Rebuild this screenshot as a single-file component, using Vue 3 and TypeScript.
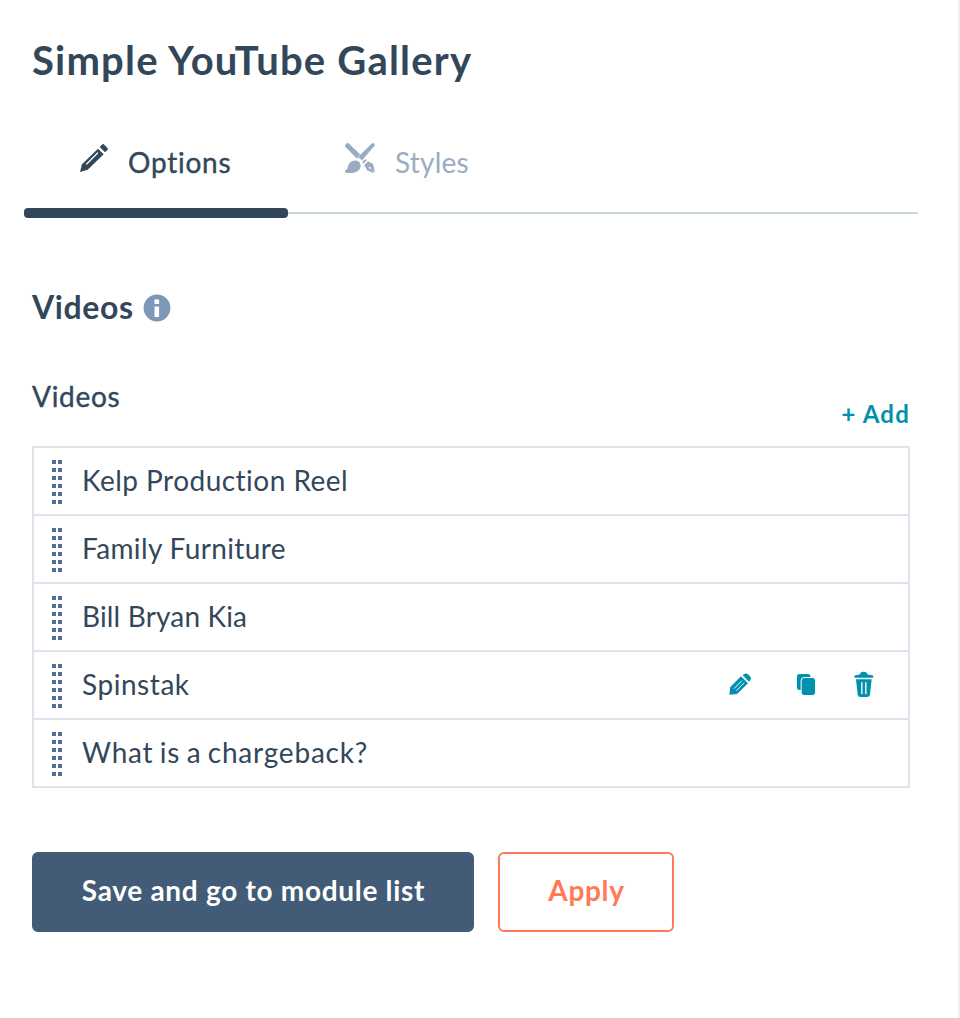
<script setup lang="ts">
import { ref } from 'vue'

interface Video {
  title: string
  spacing: string
}

const videos: Video[] = [
  { title: 'Kelp Production Reel', spacing: 'kelp' },
  { title: 'Family Furniture', spacing: 'family' },
  { title: 'Bill Bryan Kia', spacing: 'bill' },
  { title: 'Spinstak', spacing: 'spinstak' },
  { title: 'What is a chargeback?', spacing: 'what' },
]

const hovered = ref<number>(3)
</script>

<template>
  <main class="panel">
    <h1 class="title">Simple YouTube Gallery</h1>

    <nav class="tabs">
      <a class="tab active">
        <svg class="tab-icon" viewBox="30 39 90 90">
          <path fill="currentColor" d="M30 126 L36 103 L84 56 L101 73 L53 119 Z" />
          <path fill="currentColor" d="M89 51 L97 43 Q99 41 101 43 L113 55 Q115 57 113 59 L105 67 Z" />
          <path fill="none" stroke="#fff" stroke-width="3.6" stroke-linecap="round" d="M50 102 L83 69" />
        </svg>
        <span class="options">Options</span>
      </a>
      <a class="tab idle">
        <svg class="tab-icon" viewBox="30 39 90 90">
          <path fill="none" stroke="currentColor" stroke-width="15" stroke-linecap="round" d="M38 47 L60 69" />
          <path fill="currentColor" d="M50 70 L61 59 L77 74 L66 86 Z" />
          <path fill="currentColor" stroke="#fff" stroke-width="1.5" d="M109 41 Q114 36 119 41 Q122 45 118 49 L81 92 L68 81 Z" />
          <path fill="currentColor" d="M30 121 C40 120 37 108 43 100 C50 90 66 88 73 97 C82 107 75 121 63 126 C52 130 37 130 30 127 Z" />
          <path fill="currentColor" d="M81 97 L91 87 L95 91 L85 101 Z" />
          <path fill="currentColor" d="M88 105 L99 94 L114 102 L119 123 Q119 128 114 128 L96 121 Z" />
          <path fill="none" stroke="#fff" stroke-width="1.2" d="M105 114 L117 126" />
          <circle cx="104" cy="113" r="2.8" fill="#fff" />
        </svg>
        <span class="styles">Styles</span>
      </a>
    </nav>

    <h2 class="section">
      <span>Videos</span>
      <svg class="info" viewBox="0 0 28 28">
        <circle cx="14" cy="14" r="13.4" fill="#7c98b6" />
        <path fill="#fff" d="M11.500 5.500h4.600v4.500h-4.600z M11.500 12.500h4.600v10.500h-4.600z" />
      </svg>
    </h2>

    <div class="field-head">
      <label class="label">Videos</label>
      <a class="add">+ Add</a>
    </div>

    <ul class="list">
      <li v-for="(video, i) in videos" :key="video.title" class="row">
        <span class="grip"><i v-for="n in 12" :key="n" /></span>
        <span class="name" :class="video.spacing">{{ video.title }}</span>
        <span v-if="hovered === i" class="actions">
          <svg class="edit" viewBox="27 39 69 69">
            <path fill="currentColor" d="M28 104 L31 81 L63 49 L84 70 L51 102 Z" />
            <path fill="currentColor" d="M68 46 Q76 37 84 43 L91 50 Q96 57 87 65 Z" />
            <path fill="none" stroke="#fff" stroke-width="2.800" stroke-linecap="round" d="M43 85 L65 63 M50 91 L72 69" />
          </svg>
          <svg class="copy" viewBox="33 39 60 69">
            <rect x="36" y="42" width="40" height="48" rx="7" fill="currentColor" />
            <rect x="48.5" y="52.5" width="43" height="54" rx="9" fill="currentColor" stroke="#fff" stroke-width="3" />
          </svg>
          <svg class="trash" viewBox="207 33 60 81">
            <path fill="currentColor" d="M211 46 L222 44 Q225 42 227 38 Q230 35 236 35 Q242 35 245 38 Q247 42 250 44 L262 46 Q265 47 265 50 Q265 53 262 53 H211 Q208 53 208 50 Q208 47 211 46 Z" />
            <path fill="currentColor" d="M213 58 H260 L255 104 Q254 111 246 111 H227 Q219 111 218 104 Z" />
            <path stroke="#fff" stroke-width="4" stroke-linecap="round" d="M230.500 68 V101 M242.500 68 V101" />
          </svg>
        </span>
      </li>
    </ul>

    <div class="buttons">
      <button class="btn save">Save and go to module list</button>
      <button class="btn apply">Apply</button>
    </div>
  </main>
</template>

<style>
body {
  margin: 0;
  background: #fff;
}
</style>

<style scoped>
.panel {
  box-sizing: border-box;
  width: 960px;
  height: 1018px;
  padding: 36px 40px 0 32px;
  border-right: 2px solid #eaf0f6;
  background: #fff;
  color: #33475b;
  font-family: Lato, "Open Sans", sans-serif;
  font-size: 28px;
  font-variant-ligatures: none;
  overflow: hidden;
}

.title {
  margin: 0;
  font-size: 40px;
  font-weight: 700;
  line-height: 48px;
  height: 48px;
  letter-spacing: 1.2px;
  white-space: nowrap;
}

.tabs {
  display: flex;
  margin: 40px 0 0 -8px;
  height: 94px;
  background: linear-gradient(#c9d9e4, #c9d9e4) 0 88px / 894px 2px no-repeat;
}

.tab {
  box-sizing: border-box;
  display: flex;
  height: 94px;
  width: 264px;
  padding-left: 56px;
  line-height: 34px;
}

.tab > span {
  margin: 21px 0 0 18px;
}

.tab-icon {
  flex: none;
  width: 30px;
  height: 30px;
  margin-top: 19px;
}

.active {
  position: relative;
}

.active::after {
  content: "";
  position: absolute;
  left: 0;
  bottom: 0;
  width: 264px;
  height: 10px;
  border-radius: 4px;
  background: #33475b;
}

.options {
  letter-spacing: 0.75px;
  -webkit-text-stroke: 0.4px currentColor;
}

.idle {
  padding-left: 57px;
  color: #99acc2;
}

.idle > span {
  margin-left: 20px;
}

.styles {
  letter-spacing: 0.2px;
}

.section {
  display: flex;
  align-items: center;
  gap: 9px;
  height: 40px;
  margin: 69px 0 0;
  font-size: 32px;
  font-weight: 700;
  line-height: 40px;
  letter-spacing: 0.6px;
}

.info {
  width: 28px;
  height: 28px;
  margin-top: 1px;
}

.field-head {
  display: flex;
  justify-content: space-between;
  height: 67px;
  margin-top: 52px;
  padding-right: 8px;
}

.label {
  line-height: 34px;
  letter-spacing: 0.7px;
  -webkit-text-stroke: 0.4px currentColor;
}

.add {
  margin-top: 20px;
  color: #0091ae;
  font-size: 24px;
  font-weight: 700;
  line-height: 30px;
  letter-spacing: 1.2px;
}

.list {
  width: 874px;
  margin: 0;
  padding: 0;
  list-style: none;
  border: 2px solid #dfe3eb;
}

.row {
  display: flex;
  align-items: center;
  height: 66px;
}

.row + .row {
  border-top: 2px solid #dfe3eb;
}

.grip {
  display: grid;
  grid-template-columns: 4px 4px;
  grid-auto-rows: 4px;
  gap: 4px 2px;
  margin: 2px 20px 0 18px;
}

.grip i {
  background: #516f90;
}

.name {
  line-height: 34px;
  margin-bottom: 2px;
}

.kelp {
  letter-spacing: 0.47px;
}

.family {
  letter-spacing: 0.36px;
}

.bill {
  letter-spacing: 0.16px;
}

.spinstak {
  letter-spacing: 0.55px;
}

.what {
  letter-spacing: 0.8px;
  word-spacing: -1.6px;
}

.actions {
  display: flex;
  align-items: center;
  margin-left: auto;
  padding: 0 34px 1px 0;
  color: #0091ae;
}

.edit {
  width: 23px;
  height: 23px;
  margin-right: 44px;
}

.copy {
  width: 20px;
  height: 23px;
  margin-right: 38px;
}

.trash {
  width: 20px;
  height: 27px;
}

.buttons {
  display: flex;
  gap: 24px;
  margin-top: 64px;
}

.btn {
  box-sizing: border-box;
  height: 80px;
  padding: 0 0 4px 1px;
  border: 2px solid #425b76;
  border-radius: 6px;
  background: #425b76;
  color: #fff;
  font: 700 28px/34px Lato, "Open Sans", sans-serif;
  font-variant-ligatures: none;
  letter-spacing: 0.7px;
}

.save {
  width: 442px;
}

.apply {
  width: 176px;
  border-color: #ff7a59;
  background: #fff;
  color: #ff7a59;
}
</style>
